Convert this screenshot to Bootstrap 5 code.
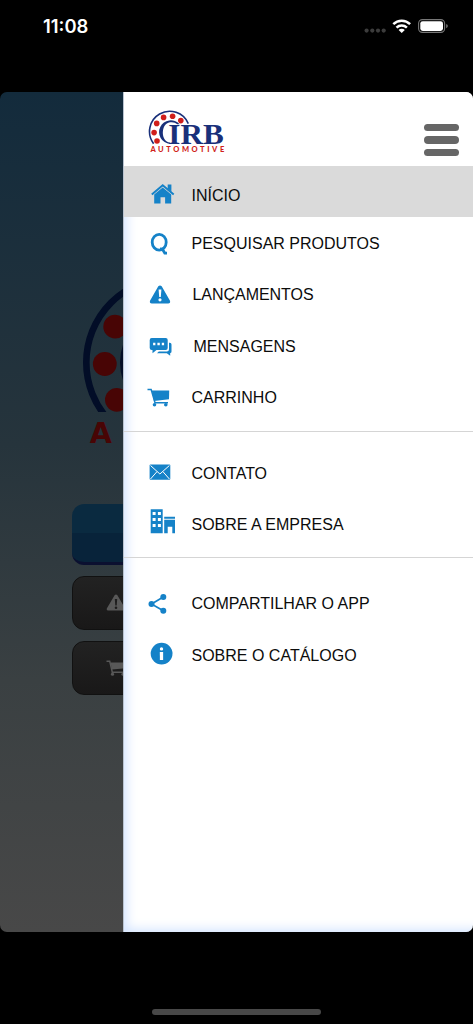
<!DOCTYPE html>
<html lang="pt-BR">
<head>
<meta charset="utf-8">
<meta name="viewport" content="width=device-width, initial-scale=1">
<title>IRB Automotive</title>
<link href="https://cdn.jsdelivr.net/npm/bootstrap@5.3.0/dist/css/bootstrap.min.css" rel="stylesheet">
<style>
  body { height: 1024px; background: #000; overflow: hidden; font-family: "Liberation Sans", Arial, sans-serif; }
  .status { height: 91.5px; padding: 15px 25px 0 43px; }
  .clock { font: 600 18.4px/23px Inter, sans-serif; color: #fff; }
  .app { height: 840.5px; border-radius: 7px; }
  .behind { width: 123px; padding-left: 72px; background: linear-gradient(#132b3c, #26343c 42%, #3a4042 70%, #484848); }
  .hero { height: 412.5px; width: 52px; }
  .tile { width: 140px; height: 54px; margin-bottom: 11.3px; border: 1.5px solid #111; border-radius: 12px; background: linear-gradient(#222, #191818); padding-left: 33px; color: #585858; }
  .tile.main { height: 60.5px; border: 0; border-bottom: 3.5px solid #0b1030; background: linear-gradient(#0a2a40 0 50%, #08233a 50%); }
  .drawer { background: #fff; border-left: 1px solid #b9c3d0; box-shadow: inset 8px -8px 11px -5px #d5e5ff; }
  .top { height: 74px; padding: 17.5px 14px 0 24px; background: #fff; }
  .bars { width: 35px; margin-top: 15px; gap: 5px; }
  .bars i { height: 7.3px; background: #666; }
  .menu { margin: 0; }
  .menu + .menu { border-top: 1.3px solid #d5d5d5; }
  .entry { height: 51.5px; padding-left: 22.5px; color: #0c0c0c; font-size: 16px; line-height: 18px; }
  .entry svg { width: 28px; height: 51.5px; color: #1582c8; flex: none; }
  .entry span { margin: 18.3px 0 0 17px; white-space: nowrap; }
  .entry span.in1 { margin-left: 18px; letter-spacing: -.04px; }
  .entry span.in2 { margin-left: 19px; }
  .entry.active { height: 51px; background: #dadada; }
  .entry.active span { margin-top: 21.3px; }
  .g1 { padding-bottom: 8px; }
  .g2 { padding: 14.8px 0 8px; }
  .g3 { padding-top: 18.7px; }
  .home-bar { width: 169px; height: 6px; background: #484848; margin-top: 77px; }
</style>
</head>
<body class="d-flex flex-column">
<header class="status d-flex justify-content-between align-items-start">
  <div class="clock">11:08</div>
  <svg width="84" height="23" viewBox="364 15 84 23">
    <g fill="#3c3c3c"><circle cx="366.6" cy="30.6" r="2.1"/><circle cx="372.3" cy="30.6" r="2.1"/><circle cx="378" cy="30.6" r="2.1"/><circle cx="383.7" cy="30.6" r="2.1"/></g>
    <g fill="none" stroke="#fff" stroke-width="2.5"><path d="M393.3 24.2a12 12 0 0 1 16.8 0M396.5 27.6a7.4 7.4 0 0 1 10.4 0"/></g>
    <path d="M398.6 30a4.4 4.4 0 0 1 6.2 0L401.7 33z" fill="#fff"/>
    <rect x="418.6" y="19.6" width="26" height="12.8" rx="3.8" fill="none" stroke="#777" stroke-width="1.1"/>
    <rect x="420.3" y="21.2" width="22.7" height="9.7" rx="2.4" fill="#fff"/>
    <path d="M446.2 24v4.2q1.6-.6 1.6-2.1T446.2 24" fill="#777"/>
  </svg>
</header>

<main class="app d-flex overflow-hidden">
  <section class="behind overflow-hidden flex-shrink-0" aria-hidden="true">
    <svg class="hero d-block" viewBox="72 91.5 52 412.5">
      <clipPath id="cut"><path d="M72 90h60v321.500h-60z"/></clipPath>
      <g clip-path="url(#cut)">
        <circle cx="171" cy="362" r="84.7" fill="none" stroke="#020d27" stroke-width="6.6"/>
        <circle cx="171" cy="362" r="48" fill="none" stroke="#020d27" stroke-width="6"/>
        <g fill="#480505"><circle cx="115.2" cy="326.2" r="11.9"/><circle cx="104.8" cy="363.5" r="11.9"/><circle cx="116.9" cy="399.3" r="11.9"/></g>
      </g>
      <text x="89.7" y="442.7" font-family="DejaVu Sans" font-weight="700" font-size="28.6" fill="#480505">A</text>
    </svg>
    <div class="tile main"></div>
    <div class="tile d-flex align-items-center">
      <svg width="20" height="18" viewBox="0 0 20 18" class="flex-shrink-0"><path fill="currentColor" fill-rule="evenodd" d="M8.6 1.3q1.4-1.7 2.8 0l7.8 13.2q.6 2-1.6 2H2.4q-2.2 0-1.6-2zM8.8 5l.5 6.4h1.4l.5-6.4zm-.1 8.7a1.3 1.3 0 1 0 2.6 0 1.3 1.3 0 0 0-2.6 0"/></svg>
    </div>
    <div class="tile d-flex align-items-center">
      <svg width="22" height="18" viewBox="0 0 22 18" class="flex-shrink-0"><path fill="none" stroke="currentColor" stroke-width="1.5" d="M.5 2.2h3.2l2.6 11h13"/><path fill="currentColor" d="M4.5 3.4h17.3l-1 5.6L6 10.5z"/><circle cx="6.5" cy="15.2" r="1.6" fill="currentColor"/><circle cx="17" cy="15.2" r="1.6" fill="currentColor"/></svg>
    </div>
  </section>

  <nav class="drawer flex-grow-1">
    <div class="top d-flex justify-content-between align-items-start">
      <svg width="78" height="45" viewBox="148 109 78 45">
        <path d="M153.600 143.700A20.200 20.200 0 1 1 188.300 123.600" fill="none" stroke="#19307a" stroke-width="1.600"/>
        <path d="M179.600 124.200A11.800 11.800 0 1 0 170 143.900V142.600C160.500 142 160.500 123.500 170 122.300Q174.500 121.600 177.300 124.200z" fill="#19307a"/>
        <g fill="#d01f1b"><circle cx="156.700" cy="123.400" r="2.800"/><circle cx="163.600" cy="117.400" r="2.800"/><circle cx="172.600" cy="116.300" r="2.800"/><circle cx="180.800" cy="120.600" r="2.800"/><circle cx="154.100" cy="132.600" r="2.800"/><circle cx="157" cy="141" r="2.800"/></g>
        <text x="168.300" y="143.900" textLength="55.400" lengthAdjust="spacingAndGlyphs" font-family="Liberation Serif" font-weight="700" font-size="29.500" fill="#19307a">IRB</text>
        <text x="150.400" y="151.700" textLength="73.800" font-family="Lato" font-weight="900" font-size="7.500" fill="#d01f1b">AUTOMOTIVE</text>
      </svg>
      <div class="bars d-flex flex-column">
        <i class="rounded-pill"></i><i class="rounded-pill"></i><i class="rounded-pill"></i>
      </div>
    </div>

    <ul class="menu g1 list-unstyled">
      <li class="entry active d-flex">
        <svg viewBox="0 0 28 51.5"><path fill="currentColor" d="M15.700 21.400 24.200 28.600V37.500H18.100V31.200H13.500V37.500H7.200V28.600z"/><path d="M4.800 28.500 15.700 19.300 26.700 28.500" fill="none" stroke="currentColor" stroke-width="2"/><path fill="currentColor" d="M20.700 18.500h3.700v7.300l-3.700-3z"/></svg>
        <span>INÍCIO</span>
      </li>
      <li class="entry d-flex">
        <svg viewBox="0 0 28 51.5"><ellipse cx="12.200" cy="25.200" rx="7" ry="7.900" fill="none" stroke="currentColor" stroke-width="2.800"/><path d="M13 32l2.500.200 2.300 4h2.200" fill="none" stroke="currentColor" stroke-width="2.800"/></svg>
        <span>PESQUISAR PRODUTOS</span>
      </li>
      <li class="entry d-flex">
        <svg viewBox="0 0 28 51.5"><path fill="currentColor" fill-rule="evenodd" d="M11.300 18.300q1.700-1.700 3.400 0l8.300 14.500q.7 2.700-1.800 2.700H4.800q-2.500 0-1.800-2.700zM11.600 21.500l.6 7.600h1.600l.6-7.600zm-.2 10.300a1.600 1.600 0 1 0 3.200 0 1.600 1.600 0 0 0-3.200 0"/></svg>
        <span class="in1">LANÇAMENTOS</span>
      </li>
      <li class="entry d-flex">
        <svg viewBox="0 0 28 51.5"><path fill="currentColor" fill-rule="evenodd" d="M4.700 18h14q2 0 2 2v8q0 2-2 2H9.500l-4 3.300V30h-.8q-2 0-2-2v-8q0-2 2-2zm1.400 4.800v2.400h2.300v-2.400zm4.300 0v2.400h2.400v-2.400zm4.400 0v2.400h2.300v-2.400z"/><path fill="currentColor" d="M22 22.700h.8q1.700 0 1.700 1.700v7q0 1.700-1.300 1.700v2.600l-3.400-2.400H10l1.800-1.900h8q2.200 0 2.200-2.200z"/></svg>
        <span class="in2">MENSAGENS</span>
      </li>
      <li class="entry d-flex">
        <svg viewBox="0 0 28 51.5"><path d="M.5 18.400h3.600L8 31.800h13" fill="none" stroke="currentColor" stroke-width="1.500"/><path fill="currentColor" d="M4.700 19.600h17.500L22 28.300 7 29.900z"/><circle cx="7.500" cy="33.800" r="1.800" fill="currentColor"/><circle cx="18.800" cy="33.800" r="1.800" fill="currentColor"/></svg>
        <span>CARRINHO</span>
      </li>
    </ul>
    <ul class="menu g2 list-unstyled">
      <li class="entry d-flex">
        <svg viewBox="0 0 28 51.5"><rect x="2.600" y="18.600" width="20.700" height="15.200" rx="1" fill="currentColor"/><path d="M3.500 19.500 12.900 28l9.500-8.500M3.500 33 10 25.600M22.400 33l-6.500-7.400" fill="none" stroke="#fff" stroke-width="1"/></svg>
        <span>CONTATO</span>
      </li>
      <li class="entry d-flex">
        <svg viewBox="0 0 28 51.5"><path fill="currentColor" fill-rule="evenodd" d="M3.700 11.200h12v24h-12zM5.600 14v3h3v-3zm5.300 0v3h3v-3zM5.600 20v3h3v-3zm5.300 0v3h3v-3zM5.600 26v3h3v-3zm5.300 0v3h3v-3zM17.200 18.700H28v2H17.200zM17.200 21.700H28v13.500h-2.700v-6.500h-4.600v6.500h-3.500z"/></svg>
        <span>SOBRE A EMPRESA</span>
      </li>
    </ul>
    <ul class="menu g3 list-unstyled">
      <li class="entry d-flex">
        <svg viewBox="0 0 28 51.5"><path d="M16.300 20 4.500 27l11.800 6.800" fill="none" stroke="currentColor" stroke-width="1.700"/><g fill="currentColor"><circle cx="16.300" cy="20" r="3"/><circle cx="4.500" cy="27" r="3"/><circle cx="16.300" cy="33.800" r="3"/></g></svg>
        <span>COMPARTILHAR O APP</span>
      </li>
      <li class="entry d-flex">
        <svg viewBox="0 0 28 51.5"><circle cx="14.600" cy="25.600" r="10.900" fill="currentColor"/><circle cx="14.500" cy="20.900" r="1.700" fill="#fff"/><path d="M12.800 24h3.300v8h-3.200z" fill="#fff"/></svg>
        <span>SOBRE O CATÁLOGO</span>
      </li>
    </ul>
  </nav>
</main>
<div class="home-bar rounded-pill mx-auto flex-shrink-0"></div>
<script src="https://cdn.jsdelivr.net/npm/bootstrap@5.3.0/dist/js/bootstrap.bundle.min.js"></script>
</body>
</html>
